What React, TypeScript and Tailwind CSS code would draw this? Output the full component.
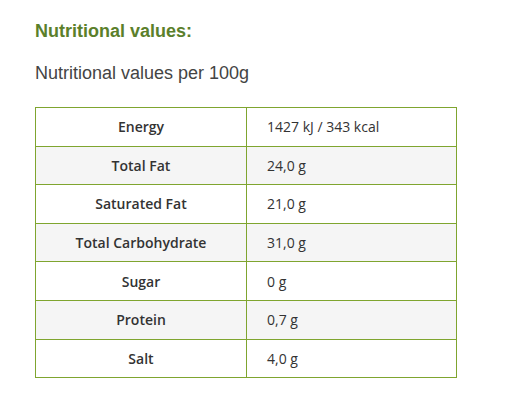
const rows = [
  { label: "Energy", value: "1427 kJ / 343 kcal" },
  { label: "Total Fat", value: "24,0 g" },
  { label: "Saturated Fat", value: "21,0 g" },
  { label: "Total Carbohydrate", value: "31,0 g" },
  { label: "Sugar", value: "0 g" },
  { label: "Protein", value: "0,7 g" },
  { label: "Salt", value: "4,0 g" },
];

export default function App() {
  return (
    <div className="w-[512px] h-[406px] bg-white pl-[35px] pt-[19px]">
      <h2 className="font-['Liberation_Sans',Arial,sans-serif] text-[18px] font-bold text-[#5b7f2b] leading-[24px]">
        Nutritional values:
      </h2>
      <p className="mt-[18px] font-['Liberation_Sans',Arial,sans-serif] text-[18px] text-[#444444] leading-[24px]">
        Nutritional values per 100g
      </p>
      <table className="mt-[22px] w-[422px] border-collapse font-['Open_Sans',sans-serif] text-[14px] text-[#333333]">
        <tbody>
          {rows.map((row, i) => (
            <tr key={row.label} className={i % 2 === 1 ? "bg-[#f5f5f5]" : "bg-white"}>
              <td className="w-[211px] h-[38.6px] border border-[#7fa52f] text-center font-semibold p-0">
                {row.label}
              </td>
              <td className="h-[38.6px] border border-[#7fa52f] pl-[20px] p-0">
                {row.value}
              </td>
            </tr>
          ))}
        </tbody>
      </table>
    </div>
  );
}
